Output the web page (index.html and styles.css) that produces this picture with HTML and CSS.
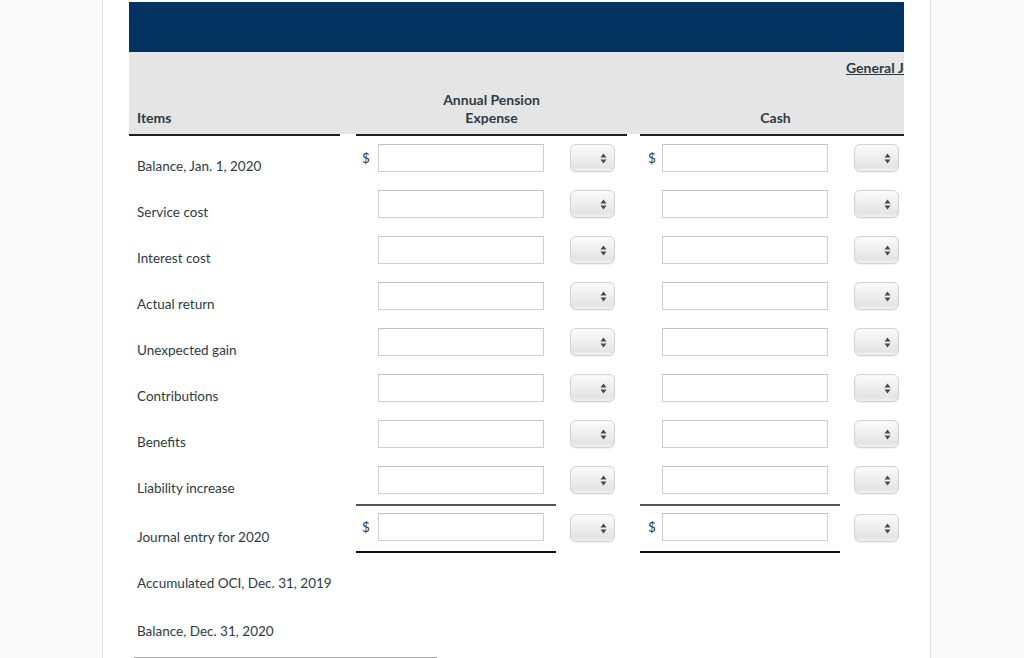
FILE: index.html
```html
<!DOCTYPE html>
<html lang="en">
<head>
  <meta charset="UTF-8">
  <title>Pension Worksheet</title>
  <link rel="stylesheet" href="styles.css">
</head>
<body>
  <div class="ws-page">
    <div class="ws-clip">
      <div class="ws-table">
        <div class="ws-topbar"></div>

        <div class="ws-head">
          <div class="ws-group"><a href="#">General Journal Entries</a></div>
          <div class="ws-cols">
            <div class="ws-c-item">Items</div>
            <div class="ws-c-amt">Annual Pension<br>Expense</div>
            <div class="ws-c-amt">Cash</div>
          </div>
        </div>

        <div class="ws-body" id="rows"></div>

        <div class="ws-row ws-row-sum">
          <div class="ws-c-item">Journal entry for 2020</div>
          <div class="ws-c-amt">
            <div class="ws-box"><span class="ws-dollar">$</span><input type="text" class="ws-input"></div>
            <div class="ws-dd"><svg width="7" height="11" viewBox="0 0 7 11"><path d="M3.5 0.5 L6.5 4.5 L0.5 4.5 Z M3.5 10.5 L6.5 6.5 L0.5 6.5 Z" fill="#4a4a4a"/></svg></div>
          </div>
          <div class="ws-c-amt">
            <div class="ws-box"><span class="ws-dollar ws-dollar-cash">$</span><input type="text" class="ws-input"></div>
            <div class="ws-dd"><svg width="7" height="11" viewBox="0 0 7 11"><path d="M3.5 0.5 L6.5 4.5 L0.5 4.5 Z M3.5 10.5 L6.5 6.5 L0.5 6.5 Z" fill="#4a4a4a"/></svg></div>
          </div>
        </div>

        <div class="ws-row ws-row-plain">
          <div class="ws-c-item">Accumulated OCI, Dec. 31, 2019</div>
        </div>
        <div class="ws-row ws-row-plain ws-row-last">
          <div class="ws-c-item">Balance, Dec. 31, 2020</div>
        </div>
        <div class="ws-rule"></div>
      </div>
    </div>
  </div>

  <script>
    (function () {
      const items = [
        "Balance, Jan. 1, 2020",
        "Service cost",
        "Interest cost",
        "Actual return",
        "Unexpected gain",
        "Contributions",
        "Benefits",
        "Liability increase"
      ];
      const arrows = '<svg width="7" height="11" viewBox="0 0 7 11"><path d="M3.5 0.5 L6.5 4.5 L0.5 4.5 Z M3.5 10.5 L6.5 6.5 L0.5 6.5 Z" fill="#4a4a4a"/></svg>';

      function amt(first, cash) {
        let d = first ? "$" : "";
        let cls = cash ? "ws-dollar ws-dollar-cash" : "ws-dollar";
        return `<div class="ws-c-amt">
          <div class="ws-box"><span class="${cls}">${d}</span><input type="text" class="ws-input"></div>
          <div class="ws-dd">${arrows}</div>
        </div>`;
      }

      let html = "";
      items.forEach((v, i) => {
        html += `<div class="ws-row">
          <div class="ws-c-item">${v}</div>
          ${amt(i === 0, false)}
          ${amt(i === 0, true)}
        </div>`;
      });
      document.getElementById("rows").innerHTML = html;
    })();
  </script>
</body>
</html>
```

FILE: styles.css
```css
html,
body {
  margin: 0;
  background-color: #fafafa;
}

body {
  font-family: Lato, "Liberation Sans", sans-serif;
  font-size: 13.5px;
  color: #2d3b45;
}

.ws-page {
  box-sizing: border-box;
  width: 829px;
  min-height: 700px;
  margin-left: 102px;
  padding: 2px 0 0 26px;
  background-color: #ffffff;
  border-left: 1px solid #e2e2e2;
  border-right: 1px solid #e2e2e2;
}

.ws-clip {
  width: 775px;
  overflow: hidden;
}

.ws-table {
  width: 1200px;
}

.ws-topbar {
  height: 50px;
  background-color: #033461;
}

/* header */

.ws-head {
  height: 84px;
  background: linear-gradient(#e5e5e5, #e5e5e5) no-repeat;
  background-size: 100% 82px;
  font-size: 14px;
  font-weight: bold;
}

.ws-group {
  height: 32px;
  padding: 8px 0 0 717px;
  box-sizing: border-box;
  line-height: 16px;
}
.ws-group a,
.ws-group a:visited {
  color: #2d3b45;
  text-decoration: underline;
}

.ws-cols {
  display: flex;
  align-items: stretch;
  height: 52px;
}
.ws-cols > div {
  box-sizing: border-box;
  display: flex;
  align-items: flex-end;
  padding-bottom: 7px;
  line-height: 18px;
  border-bottom: 2px solid #1e1e1e;
}
.ws-cols .ws-c-amt {
  justify-content: center;
  text-align: center;
}

/* columns */

.ws-c-item {
  box-sizing: border-box;
  width: 211px;
  margin-right: 16px;
  padding-left: 8px;
}

.ws-c-amt {
  width: 271px;
  margin-right: 13px;
}

/* rows */

.ws-row {
  display: flex;
  height: 46px;
}
.ws-row .ws-c-item {
  padding-top: 22px;
  line-height: 17px;
  white-space: nowrap;
}
.ws-row .ws-c-amt {
  display: flex;
  align-items: flex-start;
  padding-top: 8px;
  box-sizing: border-box;
}

.ws-box {
  display: flex;
  align-items: center;
  box-sizing: border-box;
  width: 200px;
  padding-right: 12px;
}

.ws-dollar {
  box-sizing: border-box;
  width: 22px;
  padding-left: 6px;
  line-height: 28px;
}
.ws-dollar-cash {
  padding-left: 8px;
}

.ws-input {
  box-sizing: border-box;
  width: 166px;
  height: 28px;
  margin: 0;
  padding: 2px 6px;
  border: 1px solid #cfcfcf;
  border-top-color: #c4c4c4;
  border-radius: 0;
  background: #ffffff;
  font: inherit;
}

.ws-dd {
  box-sizing: border-box;
  display: flex;
  align-items: center;
  justify-content: flex-end;
  width: 45px;
  height: 28px;
  margin-left: 14px;
  padding-right: 7px;
  border: 1px solid #d2d2d2;
  border-radius: 6px;
  background: linear-gradient(#fbfbfb 0%, #efefef 45%, #e4e4e4 85%, #f2f2f2 100%);
  box-shadow: 0 1px 1px rgba(0, 0, 0, 0.06);
}

/* totals */

.ws-row-sum {
  height: 49px;
}
.ws-row-sum .ws-c-item {
  padding-top: 25px;
}
.ws-row-sum .ws-c-amt {
  padding-top: 0;
}
.ws-row-sum .ws-box {
  padding-top: 7px;
  padding-bottom: 10px;
  border-top: 2px solid #555555;
  border-bottom: 2px solid #111111;
}
.ws-row-sum .ws-dd {
  margin-top: 10px;
}

.ws-row-plain {
  height: 48px;
}

.ws-row-last {
  height: 56px;
}

.ws-rule {
  width: 303px;
  margin-left: 5px;
  border-top: 1px solid #a8a8a8;
}
```
